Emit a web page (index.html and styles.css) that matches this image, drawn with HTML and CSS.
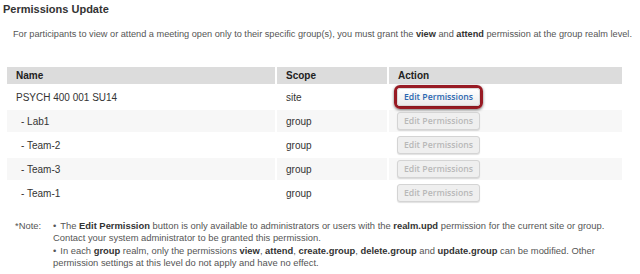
FILE: index.html
```html
<!DOCTYPE html>
<html>
<head>
<meta charset="utf-8">
<link rel="stylesheet" href="styles.css">
</head>
<body>
<div class="page">
  <h1 class="title">Permissions Update</h1>
  <p class="intro">For participants to view or attend a meeting open only to their specific group(s), you must grant the <b>view</b> and <b>attend</b> permission at the group realm level.</p>
  <table class="perm">
    <thead>
      <tr><th class="c-name">Name</th><th class="c-scope">Scope</th><th class="c-action">Action</th></tr>
    </thead>
    <tbody>
      <tr><td class="name">PSYCH 400 001 SU14</td><td class="scope">site</td><td class="action"><span class="ring"><span class="btn">Edit Permissions</span></span></td></tr>
      <tr class="alt"><td class="name sub">- Lab1</td><td class="scope">group</td><td class="action"><span class="btn off">Edit Permissions</span></td></tr>
      <tr><td class="name sub">- Team-2</td><td class="scope">group</td><td class="action"><span class="btn off">Edit Permissions</span></td></tr>
      <tr class="alt"><td class="name sub">- Team-3</td><td class="scope">group</td><td class="action"><span class="btn off">Edit Permissions</span></td></tr>
      <tr><td class="name sub">- Team-1</td><td class="scope">group</td><td class="action"><span class="btn off">Edit Permissions</span></td></tr>
    </tbody>
  </table>
  <div class="note">
    <div class="note-label">*Note:</div>
    <ul class="note-list">
      <li>The <b>Edit Permission</b> button is only available to administrators or users with the <b>realm.upd</b> permission for the current site or group. Contact your system administrator to be granted this permission.</li>
      <li>In each <b>group</b> realm, only the permissions <b>view</b>, <b>attend</b>, <b>create.group</b>, <b>delete.group</b> and <b>update.group</b> can be modified. Other permission settings at this level do not apply and have no effect.</li>
    </ul>
  </div>
</div>
</body>
</html>
```
FILE: styles.css
```css
html, body {
  margin: 0;
  padding: 0;
  background: #fff;
}
.page {
  font-family: "Liberation Sans", Arial, sans-serif;
  color: #333;
  width: 640px;
  height: 274px;
  overflow: hidden;
}
.title {
  margin: 0;
  padding: 2px 0 0 3px;
  font-size: 11px;
  line-height: 14px;
  font-weight: bold;
  color: #333;
}
.intro {
  margin: 11px 0 0 13px;
  font-size: 9.2px;
  line-height: 14px;
  color: #555;
  white-space: nowrap;
}
.intro b {
  color: #333;
}
.perm {
  margin: 24px 0 0 5px;
  border-collapse: separate;
  border-spacing: 2px;
  width: 619px;
  font-size: 10px;
  color: #333;
}
.perm th {
  background: #dcdcdc;
  text-align: left;
  font-weight: bold;
  height: 17px;
  padding: 0 0 0 9px;
  font-size: 10px;
  color: #222;
}
.perm th.c-name { width: 259px; }
.perm th.c-scope { width: 101px; }
.perm th.c-action { padding-left: 9px; }
.perm td {
  height: 22px;
  padding: 0 0 0 9px;
  vertical-align: middle;
}
.perm tr.alt td {
  background: #f7f7f7;
}
.perm td.sub {
  padding-left: 14px;
}
.perm td.action {
  padding-left: 8px;
}
.btn {
  display: inline-block;
  box-sizing: border-box;
  width: 83px;
  height: 18px;
  line-height: 16px;
  text-align: center;
  border: 1px solid #c8c8c8;
  border-radius: 3px;
  background: linear-gradient(#ffffff, #ececec);
  box-shadow: 0 1px 1px rgba(0,0,0,0.12);
  font-family: "Open Sans", "Liberation Sans", sans-serif;
  font-weight: 600;
  font-size: 8.7px;
  color: #2a66b0;
  vertical-align: middle;
}
.btn.off {
  color: #b8b8b8;
  background: #efefef;
  border-color: #d4d4d4;
}
.ring {
  display: inline-block;
  margin: -3px;
  padding: 0;
  border: 3px solid #981b24;
  border-radius: 6px;
  box-shadow: 0 1px 3px rgba(0,0,0,0.55);
  vertical-align: middle;
  line-height: 0;
}
.ring .btn {
  border-color: #d8d8d8;
}
.note {
  display: flex;
  margin: 14px 0 0 15px;
  font-size: 9.4px;
  line-height: 11.5px;
  color: #555;
}
.note b {
  color: #333;
}
.note-label {
  width: 38px;
  flex: none;
}
.note-list {
  margin: 0;
  padding: 0;
  list-style: none;
  width: 575px;
}
.note-list li {
  margin-bottom: 2px;
}
.note-list li::before {
  content: "\2022";
  margin-right: 4px;
}
```
